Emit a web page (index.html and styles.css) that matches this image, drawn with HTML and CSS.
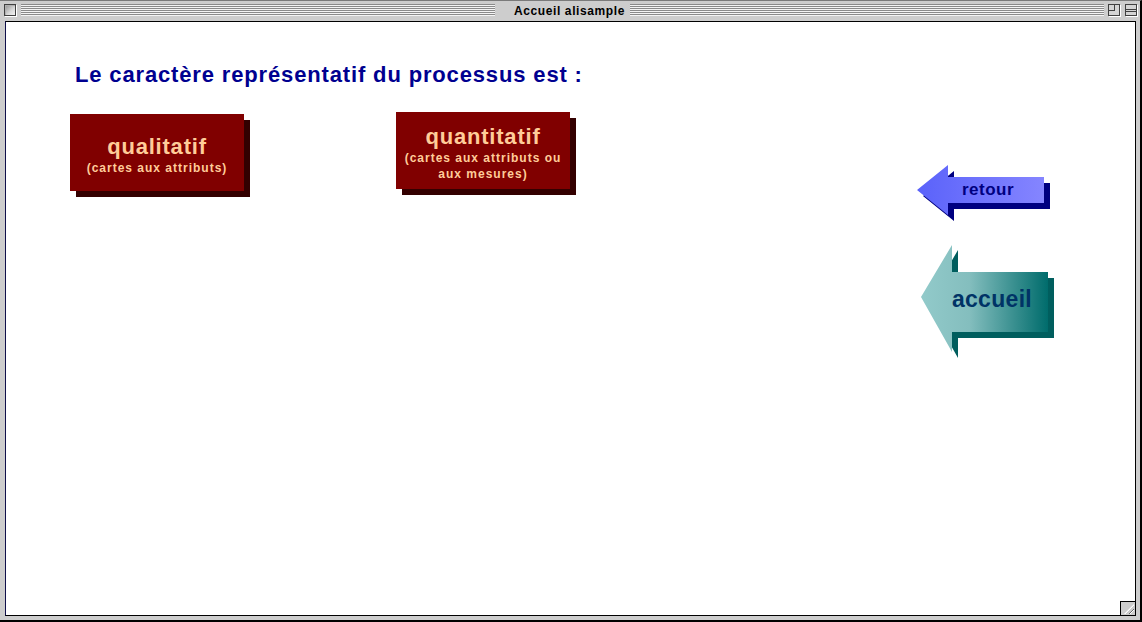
FILE: index.html
```html
<!DOCTYPE html>
<html lang="fr">
<head>
<meta charset="utf-8">
<title>Accueil alisample</title>
<link rel="stylesheet" href="styles.css">
</head>
<body>
<div class="window">
  <div class="titlebar">
    <span class="close-box"></span>
    <span class="stripes"></span>
    <span class="title">Accueil alisample</span>
    <span class="stripes"></span>
    <span class="zoom-box"><span class="zoom-inner"></span></span>
    <span class="collapse-box"><span class="collapse-line"></span></span>
  </div>
  <div class="content">
    <div class="main">
      <h1 class="question">Le caractère représentatif du processus est :</h1>
      <div class="choices">
        <a class="choice choice-first" href="#">
          <span class="choice-title">qualitatif</span>
          <span class="choice-sub">(cartes aux attributs)</span>
        </a>
        <a class="choice" href="#">
          <span class="choice-title">quantitatif</span>
          <span class="choice-sub">(cartes aux attributs ou<br>aux mesures)</span>
        </a>
      </div>
    </div>
    <div class="nav">
      <svg class="arrow-retour" width="141" height="62" viewBox="0 0 141 62">
        <defs>
          <linearGradient id="gBlue" gradientUnits="userSpaceOnUse" x1="2" y1="0" x2="129" y2="0">
            <stop offset="0" stop-color="#5a62fa"/>
            <stop offset="1" stop-color="#8585ff"/>
          </linearGradient>
        </defs>
        <polygon points="8,33 39,8 39,20 135,20 135,46 39,46 39,58" fill="#000080"/>
        <polygon points="2,27 33,2 33,14 129,14 129,40 33,40 33,52" fill="url(#gBlue)"/>
        <text x="73" y="32" class="arrow-text retour-text" text-anchor="middle">retour</text>
      </svg>
      <svg class="arrow-accueil" width="141" height="117" viewBox="0 0 141 117">
        <defs>
          <linearGradient id="gTeal" gradientUnits="userSpaceOnUse" x1="6" y1="0" x2="133" y2="0">
            <stop offset="0" stop-color="#92caca"/>
            <stop offset="0.38" stop-color="#84bebe"/>
            <stop offset="1" stop-color="#006c6c"/>
          </linearGradient>
        </defs>
        <polygon points="12,60 43,7 43,35 139,35 139,95 43,95 43,115" fill="#005e5e"/>
        <polygon points="6,54 37,2 37,29 133,29 133,89 37,89 37,109" fill="url(#gTeal)"/>
        <text x="77" y="64" class="arrow-text accueil-text" text-anchor="middle">accueil</text>
      </svg>
    </div>
  </div>
  <div class="grow-box"><span class="grow-lines"></span></div>
</div>
</body>
</html>
```

FILE: styles.css
```css
* {
  box-sizing: border-box;
}

html, body {
  margin: 0;
  padding: 0;
  background: #cdcdcd;
}

.window {
  position: relative;
  width: 1142px;
  height: 622px;
  background: #cdcdcd;
  border-top: 1px solid #7a7a7a;
  border-right: 2px solid #000;
  border-bottom: 2px solid #000;
  display: flex;
  flex-direction: column;
  font-family: "Liberation Sans", Arial, sans-serif;
}

/* ---------- title bar ---------- */
.titlebar {
  height: 20px;
  flex: 0 0 20px;
  display: flex;
  align-items: flex-start;
  padding: 3px 3px 0 4px;
}

.close-box {
  width: 12px;
  height: 12px;
  flex: 0 0 12px;
  border: 1px solid #404040;
  background: linear-gradient(135deg, #8e8e8e 0%, #d8d8d8 60%, #f2f2f2 100%);
  box-shadow: 1px 1px 0 #fff, inset 1px 1px 0 #b0b0b0;
  margin-right: 5px;
}

.stripes {
  flex: 1 1 auto;
  height: 12px;
  background: repeating-linear-gradient(to bottom, #8a8a8a 0 1px, #f4f4f4 1px 2px);
}

.title {
  flex: 0 0 auto;
  padding: 0 5px;
  margin-left: 14px;
  font-size: 12px;
  font-weight: bold;
  letter-spacing: 0.6px;
  line-height: 14px;
  color: #000;
}

.zoom-box,
.collapse-box {
  position: relative;
  width: 12px;
  height: 12px;
  flex: 0 0 12px;
  border: 1px solid #404040;
  background: #d4d4d4;
  box-shadow: 1px 1px 0 #fff;
}

.zoom-box {
  margin-left: 4px;
}

.collapse-box {
  margin-left: 5px;
}

.zoom-inner {
  display: block;
  width: 6px;
  height: 6px;
  border-right: 1px solid #404040;
  border-bottom: 1px solid #404040;
}

.collapse-line {
  display: block;
  margin-top: 4px;
  height: 3px;
  border-top: 1px solid #404040;
  border-bottom: 1px solid #404040;
}

/* ---------- content ---------- */
.content {
  flex: 1 1 auto;
  margin: 0 4px 4px 5px;
  border: 1px solid #000;
  border-left-color: #10104a;
  background: #fff;
  display: flex;
  align-items: flex-start;
  padding: 41px 0 0 64px;
}

.main {
  display: flex;
  flex-direction: column;
}

.question {
  margin: 0 0 0 5px;
  font-size: 22px;
  line-height: 24px;
  font-weight: bold;
  letter-spacing: 0.85px;
  color: #000090;
}

.choices {
  display: flex;
  align-items: flex-start;
  gap: 152px;
  margin-top: 25px;
}

.choice {
  width: 174px;
  height: 77px;
  padding-top: 5px;
  background: #800000;
  box-shadow: 6px 6px 0 #330000;
  display: flex;
  flex-direction: column;
  justify-content: center;
  align-items: center;
  text-align: center;
  text-decoration: none;
  color: #ffcc99;
  font-weight: bold;
}

.choice-first {
  margin-top: 2px;
}

.choice-title {
  font-size: 22px;
  line-height: 24px;
  letter-spacing: 0.8px;
}

.choice-sub {
  font-size: 12px;
  line-height: 16px;
  letter-spacing: 1px;
  margin-top: 1px;
}

.nav {
  margin-left: auto;
  margin-right: 79px;
  margin-top: 100px;
  display: flex;
  flex-direction: column;
  gap: 18px;
}

.nav svg {
  display: block;
}

.arrow-text {
  font-family: "Liberation Sans", Arial, sans-serif;
  font-weight: bold;
}

.retour-text {
  font-size: 17px;
  letter-spacing: 0.5px;
  fill: #000080;
}

.accueil-text {
  font-size: 23px;
  letter-spacing: 0.3px;
  fill: #003366;
}

/* ---------- grow box (overlays the content corner) ---------- */
.grow-box {
  position: absolute;
  left: 1120px;
  top: 600px;
  width: 15px;
  height: 14px;
  background: #cdcdcd;
  border-top: 1px solid #000;
  border-left: 1px solid #000;
  overflow: hidden;
}

.grow-lines {
  position: absolute;
  left: 3px;
  top: 2px;
  width: 10px;
  height: 10px;
  background: repeating-linear-gradient(135deg, transparent 0 2px, #6a6a6a 2px 3px, #fff 3px 4px);
  clip-path: polygon(100% 0, 100% 100%, 0 100%);
}
```
